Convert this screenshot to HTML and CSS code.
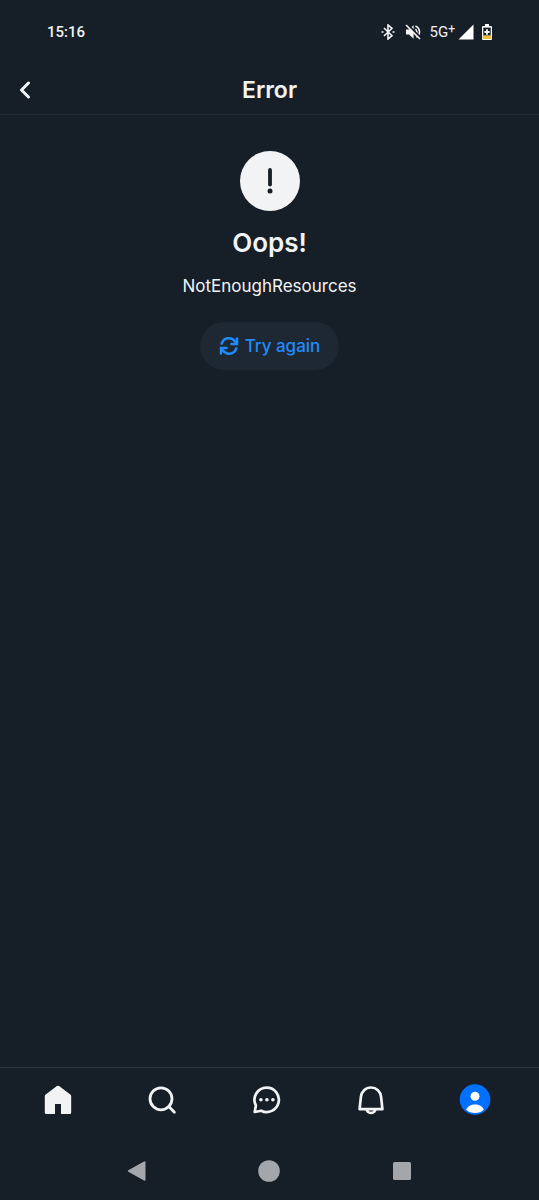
FILE: index.html
```html
<!DOCTYPE html>
<html lang="en">
<head>
  <meta charset="UTF-8">
  <meta name="viewport" content="width=device-width, initial-scale=1.0">
  <title>Error</title>
  <link rel="stylesheet" href="styles.css">
</head>
<body>
  <div class="status">
    <span class="time">15:16</span>
    <div class="signals">
      <svg class="bluetooth" width="14" height="16" viewBox="0 0 14 16" fill="none" stroke="#f1f3f5" stroke-width="1.6">
        <path d="M3 4l8 7.7L7 15V1l4 3.3L3 12"/>
        <path d="M0.5 8h2M11.5 8h2"/>
      </svg>
      <svg class="muted" width="16" height="16" viewBox="0 0 16 16">
        <path d="M1 5.4h3L8.6 1.2v13.6L4 10.6H1z" fill="#f1f3f5"/>
        <path d="M10.4 5q1.5 1.3 1.5 3t-1.5 3M10.5 2q4 1.8 4 6 0 3.4-3 5.4" fill="none" stroke="#f1f3f5" stroke-width="1.6"/>
        <path d="M2.2 0.2l14 14" stroke="#161e27" stroke-width="2"/>
        <path d="M1 1l14 14" stroke="#f1f3f5" stroke-width="1.6"/>
      </svg>
      <span class="network">5G<sup>+</sup></span>
      <svg class="signal" width="16" height="16" viewBox="0 0 16 16"><path d="M15.5 0.5v15H0.5z" fill="#fff"/></svg>
      <svg width="10" height="16" viewBox="0 0 10 16">
        <path d="M3 0h4v2h2q1 0 1 1v12q0 1-1 1H1q-1 0-1-1V3q0-1 1-1h2z" fill="#fff"/>
        <path d="M1.3 3.6h7.4v8H1.3z" fill="#161e27"/>
        <path d="M0.6 11.6h8.8V15H0.6z" fill="#f4bd35"/>
        <path d="M5 5.2v5.6M2.4 8h5.2" stroke="#fff" stroke-width="1.8"/>
      </svg>
    </div>
  </div>

  <header class="header">
    <button class="back" aria-label="Back">
      <svg width="12" height="18" viewBox="0 0 12 18" fill="none" stroke="#f1f3f5" stroke-width="3" stroke-linecap="round" stroke-linejoin="round"><path d="M9.5 2L2.5 9l7 7"/></svg>
    </button>
    <h1>Error</h1>
  </header>

  <main class="content">
    <svg width="60" height="60" viewBox="0 0 60 60">
      <circle cx="30" cy="30" r="30" fill="#f1f3f5"/>
      <path d="M30 19v14.5" stroke="#161e27" stroke-width="3.8" stroke-linecap="round"/>
      <circle cx="30" cy="40" r="2.5" fill="#161e27"/>
    </svg>
    <h2>Oops!</h2>
    <p>NotEnoughResources</p>
    <button class="retry">
      <svg width="20" height="20" viewBox="0 0 20 20" fill="none" stroke="#208bfe" stroke-width="2.5" stroke-linecap="round">
        <path d="M2.6 7.6C4.9 1.2 12.600 0.4 16.600 6.200"/>
        <path d="M18 2.400v5.500h-5.600"/>
        <path d="M17.400 12.400C15.100 18.800 7.400 19.600 3.400 13.800"/>
        <path d="M2 17.600v-5.500h5.600"/>
      </svg>
      <span>Try again</span>
    </button>
  </main>

  <nav class="tabs">
    <a href="#" aria-label="Home">
      <svg width="32" height="32" viewBox="0 0 32 32"><path d="M14.9 2.1q1.1-.8 2.2 0l11.2 8.3q.9.7.9 1.8v16.3q0 1.5-1.5 1.5H19V20h-6v10H4.300q-1.500 0-1.500-1.500V12.200q0-1.100.9-1.800z" fill="#f1f3f5"/></svg>
    </a>
    <a href="#" aria-label="Search">
      <svg width="32" height="32" viewBox="0 0 32 32" fill="none" stroke="#f1f3f5" stroke-width="2.8" stroke-linecap="round"><circle cx="15" cy="14.800" r="11"/><path d="M22.800 22.600l5.600 5.600"/></svg>
    </a>
    <a href="#" aria-label="Chat">
      <svg width="32" height="32" viewBox="0 0 32 32">
        <path d="M15.800 3.600a12.200 12.200 0 1 1-5.600 23.100L3.700 28l1.200-6.500A12.200 12.200 0 0 1 15.800 3.600z" fill="none" stroke="#f1f3f5" stroke-width="2.700" stroke-linejoin="round"/>
        <g fill="#f1f3f5"><circle cx="9.900" cy="15.800" r="1.800"/><circle cx="15.900" cy="15.800" r="1.800"/><circle cx="21.900" cy="15.800" r="1.800"/></g>
      </svg>
    </a>
    <a href="#" aria-label="Notifications">
      <svg width="32" height="32" viewBox="0 0 32 32" fill="none" stroke="#f1f3f5" stroke-width="2.700" stroke-linejoin="round" stroke-linecap="round">
        <path d="M16 3.500c-5.500 0-9.600 4-10.100 9.400L4.600 25.200h22.800l-1.300-12.300C25.600 7.500 21.500 3.500 16 3.500z"/>
        <path d="M11.700 26q1.400 3 4.300 3t4.300-3"/>
      </svg>
    </a>
    <a href="#" aria-label="Profile">
      <svg width="32" height="32" viewBox="0 0 32 32">
        <circle cx="16" cy="15.500" r="15.300" fill="#0070ff"/>
        <circle cx="16" cy="12.200" r="4.500" fill="#fff"/>
        <path d="M7.200 25.800c1.400-3.800 4.800-5.300 8.800-5.300s7.400 1.500 8.800 5.300q-3.700 3.300-8.800 3.300t-8.800-3.300z" fill="#fff"/>
      </svg>
    </a>
  </nav>

  <div class="system">
    <button aria-label="System back">
      <svg width="22" height="22" viewBox="0 0 22 22"><path d="M2.800 11L18.500 2.300v17.400z" fill="#a3a6aa" stroke="#a3a6aa" stroke-width="2" stroke-linejoin="round"/></svg>
    </button>
    <button aria-label="System home">
      <svg width="22" height="22" viewBox="0 0 22 22"><circle cx="11" cy="11" r="10.800" fill="#a3a6aa"/></svg>
    </button>
    <button aria-label="Recent apps">
      <svg width="22" height="22" viewBox="0 0 22 22"><rect x="2" y="2" width="18" height="18" rx="1.500" fill="#a3a6aa"/></svg>
    </button>
  </div>
</body>
</html>
```
FILE: styles.css
```css
* {
  margin: 0;
  padding: 0;
  box-sizing: border-box;
}

body {
  display: flex;
  flex-direction: column;
  min-height: 100vh;
  background-color: #161e27;
  color: #f1f3f5;
  font-family: Inter, sans-serif;
}

button {
  border: none;
  background: none;
  font-family: inherit;
  cursor: pointer;
}

svg {
  display: block;
}

.status {
  display: flex;
  align-items: center;
  justify-content: space-between;
  height: 64px;
  padding: 0 47px;
  font-family: Roboto, sans-serif;
}

.time {
  font-size: 15px;
  font-weight: 500;
}

.signals {
  display: flex;
  align-items: center;
}

.bluetooth {
  margin-right: 10px;
}

.muted {
  margin-right: 9px;
}

.network {
  font-size: 15px;
  line-height: 16px;
}

.network sup {
  font-size: 12px;
  line-height: 0;
  vertical-align: 4px;
}

.signal {
  margin: 0 8px 0 3px;
}

.header {
  display: grid;
  grid-template-columns: 50px 1fr 50px;
  align-items: center;
  height: 51px;
  padding-top: 1px;
  border-bottom: 1px solid #212b35;
}

.back {
  display: flex;
  align-items: center;
  justify-content: center;
  height: 48px;
}

.header h1 {
  text-align: center;
  font-size: 23px;
  font-weight: 600;
}

.content {
  flex: 1;
  display: flex;
  flex-direction: column;
  align-items: center;
  padding-top: 36px;
}

.content h2 {
  margin-top: 16px;
  font-size: 26px;
  line-height: 32px;
  font-weight: 600;
}

.content p {
  margin-top: 15px;
  font-size: 17px;
  line-height: 24px;
}

.retry {
  display: flex;
  align-items: center;
  gap: 6px;
  height: 48px;
  margin-top: 24px;
  padding: 0 19px;
  border-radius: 24px;
  background-color: #1d2833;
  color: #208bfe;
  font-size: 17px;
  font-weight: 500;
}

.tabs {
  display: flex;
  height: 76px;
  padding: 0 12px 0 6px;
  border-top: 1px solid #2a343f;
}

.tabs a {
  flex: 1;
  display: flex;
  justify-content: center;
  padding-top: 16px;
}

.system {
  display: flex;
  height: 57px;
  padding: 0 13% 1px;
}

.system button {
  flex: 1;
  display: flex;
  align-items: center;
  justify-content: center;
}
```
